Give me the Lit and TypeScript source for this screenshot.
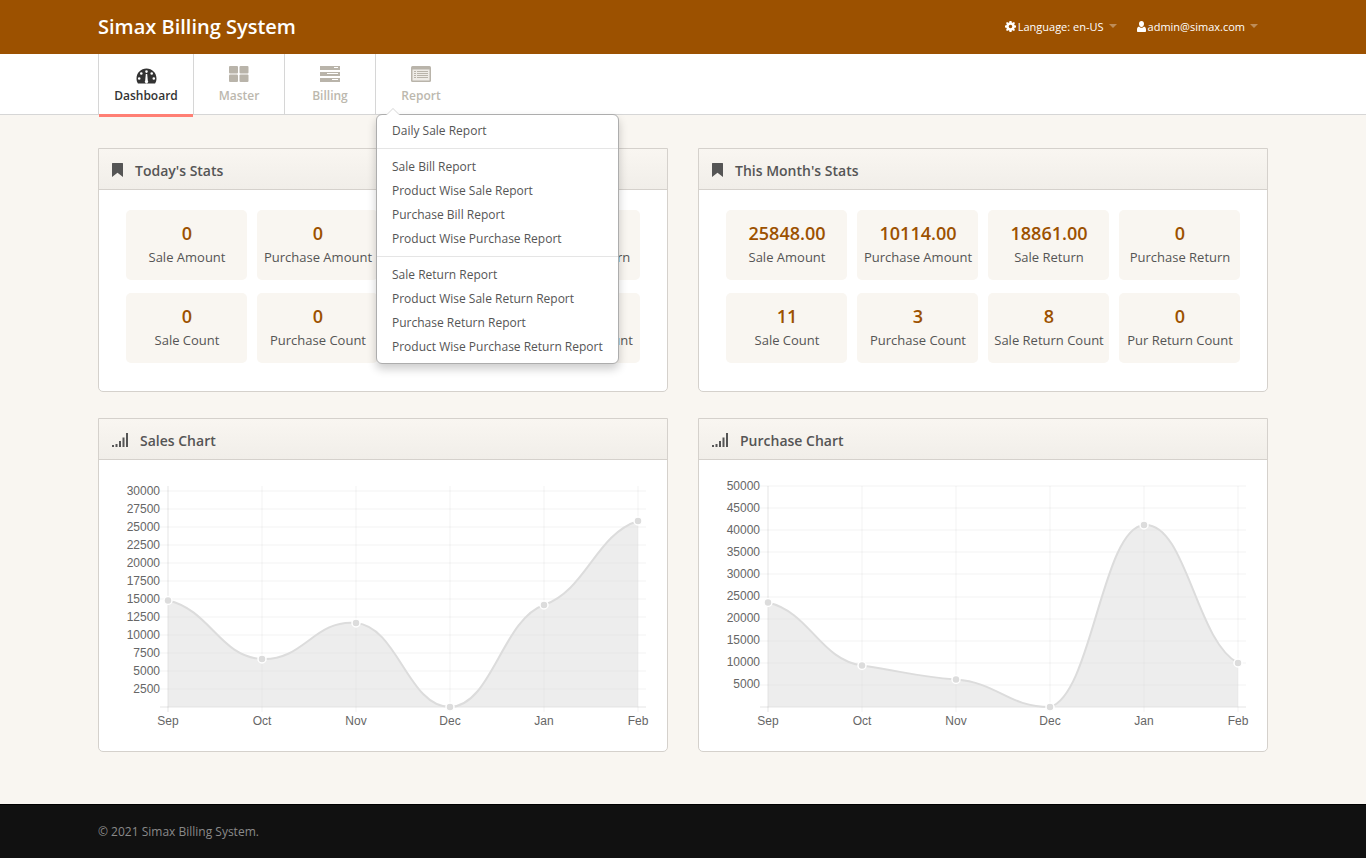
import { LitElement, html, css, svg } from "lit";
import { customElement } from "lit/decorators.js";

type Pt = [number, number];

function spline(pts: Pt[], top: number, bottom: number): string {
  const damp = 0.35;
  const h = 42;
  const n = pts.length;
  const slope = pts.map((p, i) => {
    const a = pts[Math.max(0, i - 1)], b = pts[Math.min(n - 1, i + 1)];
    return (damp * (b[1] - a[1])) / (b[0] - a[0]);
  });
  const cap = (y: number) => Math.min(bottom, Math.max(top, y));
  let d = `M${pts[0][0]} ${pts[0][1]}`;
  for (let i = 1; i < n; i++) {
    const p = pts[i - 1], q = pts[i];
    d += ` C${p[0] + h} ${cap(p[1] + slope[i - 1] * h)} ${q[0] - h} ${cap(q[1] - slope[i] * h)} ${q[0]} ${q[1]}`;
  }
  return d;
}

const MONTHS = ["Sep", "Oct", "Nov", "Dec", "Jan", "Feb"];

function chart(ticks: number[], gridTop: number, ys: number[], x0: number) {
  const bottom = 247;
  const step = (bottom - gridTop) / (ticks.length - 1);
  const xs = MONTHS.map((_, i) => x0 + i * 94);
  const pts: Pt[] = xs.map((x, i) => [x, ys[i]]);
  const line = spline(pts, gridTop, bottom);
  return html`<svg class="chart" width="568" height="291" viewBox="0 0 568 291">
    ${ticks.map((v, i) => {
      const y = gridTop + i * step;
      const yy = Math.round(y);
      return svg`<line x1=${x0 - 8} x2=${x0 + 478} y1=${yy} y2=${yy} stroke="rgba(0,0,0,${v === 0 ? 0.1 : 0.05})"></line>
      ${v === 0 ? "" : svg`<text class="ylab" x=${x0 - 8} y=${y + 3.5}>${v}</text>`}`;
    })}
    ${xs.map(
      (x, i) => svg`<line x1=${x} x2=${x} y1="26" y2="252" stroke="rgba(0,0,0,${i === 0 ? 0.1 : 0.05})"></line>
      <text class="xlab" x=${x} y="265">${MONTHS[i]}</text>`
    )}
    <path d="${line} L${xs[5]} ${bottom} L${xs[0]} ${bottom} Z" fill="rgba(220,220,220,.5)"></path>
    <path d=${line} fill="none" stroke="#dcdcdc" stroke-width="2"></path>
    ${pts.map((p) => svg`<circle cx=${p[0]} cy=${p[1]} r="4" fill="#dcdcdc" stroke="#fff" stroke-width="1.500"></circle>`)}
  </svg>`;
}

const ic = {
  dash: html`<svg class="dash" width="21" height="16" viewBox="0 0 21 16"><path fill="#333" fill-rule="evenodd" d="M10.500 .5C4.900 .5 .5 4.900 .5 10.500c0 1.900.5 3.500 1.400 5h17.200c.9-1.500 1.400-3.100 1.400-5C20.500 4.900 16.100 .5 10.500 .5ZM10.500 2.300a1.300 1.300 0 1 1 0 2.600 1.300 1.300 0 0 1 0-2.600ZM5.300 4.200a1.300 1.300 0 1 1 0 2.600 1.300 1.300 0 0 1 0-2.600ZM15.700 4.200a1.300 1.300 0 1 1 0 2.600 1.300 1.300 0 0 1 0-2.600ZM3.200 9.200a1.300 1.300 0 1 1 0 2.600 1.300 1.300 0 0 1 0-2.600ZM17.800 9.200a1.300 1.300 0 1 1 0 2.600 1.300 1.300 0 0 1 0-2.600ZM9.800 6h1.400l.6 6.400a1.700 1.700 0 1 1-2.600 0Z"></path></svg>`,
  master: html`<svg width="20" height="16" viewBox="0 0 20 16"><g fill="#b9b4aa"><rect x="0" y="0" width="9" height="7.500" rx="1"></rect><rect x="10.500" y="0" width="9" height="7.500" rx="1"></rect><rect x="0" y="8.500" width="9" height="7.500" rx="1"></rect><rect x="10.500" y="8.500" width="9" height="7.500" rx="1"></rect></g></svg>`,
  billing: html`<svg width="20" height="16" viewBox="0 0 20 16"><g fill="#b9b4aa"><rect y="0" width="20" height="4"></rect><rect y="6" width="20" height="4"></rect><rect y="12" width="20" height="4"></rect></g><g fill="#fff"><rect x="14" y="1" width="4" height="1"></rect><rect x="7" y="7" width="11" height="1"></rect><rect x="12" y="13" width="6" height="1"></rect></g></svg>`,
  report: html`<svg width="20" height="16" viewBox="0 0 20 16"><rect width="20" height="16" rx="1.500" fill="#b9b4aa"></rect><rect x="1.500" y="3.500" width="17" height="11" fill="#efece7"></rect><g fill="#b9b4aa"><rect x="3" y="5" width="2" height="1"></rect><rect x="6" y="5" width="11" height="1"></rect><rect x="3" y="7" width="2" height="1"></rect><rect x="6" y="7" width="11" height="1"></rect><rect x="3" y="9" width="2" height="1"></rect><rect x="6" y="9" width="11" height="1"></rect><rect x="3" y="11" width="2" height="1"></rect><rect x="6" y="11" width="11" height="1"></rect></g></svg>`,
  bookmark: html`<svg width="11" height="14" viewBox="0 0 11 14"><path fill="#555" d="M0 .5C0 .2.2 0 .5 0h10c.3 0 .5.2.5.5V14L5.500 9.800 0 14Z"></path></svg>`,
  signal: html`<svg width="16" height="14" viewBox="0 0 16 14"><g fill="#555"><rect x="0" y="12" width="2" height="2"></rect><rect x="3.500" y="11" width="2" height="3"></rect><rect x="7" y="8" width="2" height="6"></rect><rect x="10.500" y="4.500" width="2" height="9.500"></rect><rect x="14" y="0" width="2" height="14"></rect></g></svg>`,
  gear: html`<svg width="11" height="11" viewBox="0 0 11 11"><path fill="#fff" fill-rule="evenodd" d="M4.500 0h2l.3 1.400.9.4L8.900 1l1.100 1.100-.8 1.200.4.900 1.400.3v2l-1.400.3-.4.9.8 1.200L8.900 10l-1.200-.8-.9.4-.3 1.400h-2l-.3-1.400-.9-.4-1.200.8L1 8.900l.8-1.200-.4-.9L0 6.500v-2l1.400-.3.4-.9L1 2.100 2.100 1l1.200.8.9-.4ZM5.500 3.700a1.800 1.800 0 1 0 0 3.600 1.800 1.800 0 0 0 0-3.600Z"></path></svg>`,
  user: html`<svg width="9" height="11" viewBox="0 0 9 11"><path fill="#fff" d="M4.500 0C6.100 0 7 1.200 7 2.800S6 6 4.500 6 2 4.400 2 2.800 2.900 0 4.500 0ZM2 5.500C2.600 6.300 3.500 6.800 4.500 6.800S6.400 6.300 7 5.500c1.300.3 2 1.500 2 3.100V10c0 .6-.4 1-1 1H1c-.6 0-1-.4-1-1V8.600C0 7 .7 5.800 2 5.500Z"></path></svg>`,
};

@customElement("app-root")
export class AppRoot extends LitElement {
  static styles = css`
    :host { display: block; min-height: 858px; background: #f9f6f1; font-family: "Open Sans", sans-serif; font-size: 13px; color: #555; }
    * { box-sizing: border-box; }
    .wrap { width: 1170px; margin: 0 auto; }
    .top { background: #9c5100; height: 54px; color: #fff; }
    .top .wrap { display: flex; align-items: center; justify-content: space-between; height: 54px; padding-bottom: 2px; }
    .brand { font-size: 20px; font-weight: 600; }
    .topr { display: flex; align-items: center; padding-right: 10px; font-size: 11px; }
    .topi { display: flex; align-items: center; gap: 2px; }
    .topi.u { margin-left: 20px; }
    .caret { width: 0; height: 0; margin-left: 3px; border: 4px solid transparent; border-top-color: rgba(255,255,255,.35); border-bottom: 0; }
    .sub { background: #fff; height: 61px; border-bottom: 1px solid #d6d6d6; }
    .tabs { display: flex; }
    .tab { position: relative; width: 91px; height: 60px; border-left: 1px solid #d6d6d6; display: flex; flex-direction: column; align-items: center; padding-top: 12px; font-size: 12px; line-height: 16px; font-weight: 600; color: #bcb8ae; }
    .tab svg { display: block; height: 16px; margin-bottom: 6px; }
    .tab svg.dash { margin-top: 2px; margin-bottom: 4px; }
    .tab.act { width: 95px; color: #333; }
    .tab.act::after { content: ""; position: absolute; left: 0; right: 0; bottom: -3px; height: 3px; background: #ff7f74; }
    .menu { position: absolute; z-index: 5; left: 0; top: 60px; width: 243px; height: 250px; background: #fff; border: 1px solid #adadad; border-radius: 6px; box-shadow: 0 5px 10px rgba(0,0,0,.2); padding: 4px 0; color: #555; font-size: 12px; line-height: 24px; font-weight: 400; }
    .menu::before { content: ""; position: absolute; left: 9px; top: -7px; border: 7px solid transparent; border-top: 0; border-bottom-color: #d6d6d6; }
    .menu::after { content: ""; position: absolute; left: 10px; top: -6px; border: 6px solid transparent; border-top: 0; border-bottom-color: #fff; }
    .menu div.it { height: 24px; padding-left: 15px; white-space: nowrap; }
    .menu hr { margin: 5px 0 6px; border: 0; border-top: 1px solid #e5e5e5; height: 0; }
    .main { padding-top: 33px; height: 689px; }
    .grid { display: grid; grid-template-columns: 570px 570px; gap: 26px 30px; }
    .panel { background: #fff; border: 1px solid #d5d1cc; border-radius: 0 0 5px 5px; }
    .phead { height: 41px; border-bottom: 1px solid #d5d1cc; background: linear-gradient(#f9f6f1, #f1eee9); display: flex; align-items: center; padding: 2px 0 0 13px; font-size: 14px; font-weight: 600; color: #555; }
    .phead svg { margin-right: 12px; }
    .tiles { display: grid; grid-template-columns: repeat(4, 121px); gap: 13px 10px; padding: 20px 27px 28px; }
    .tile { height: 70px; background: #f9f6f1; border-radius: 5px; text-align: center; padding: 9px 0 0 1px; }
    .val { font-size: 18px; font-weight: 600; color: #9c5100; line-height: 28px; }
    .lab { font-size: 13px; color: #555; line-height: 18px; padding-top: 1px; white-space: nowrap; }
    .chart { display: block; }
    .ylab { font: 12px "Liberation Sans", Arial, sans-serif; fill: #666; text-anchor: end; }
    .xlab { font: 12px "Liberation Sans", Arial, sans-serif; fill: #666; text-anchor: middle; }
    .foot { height: 54px; background: #111; border-top: 1px solid #000; color: #8a8a8a; font-size: 12px; display: flex; align-items: center; }
  `;

  private tiles(vals: string[]) {
    const labs = ["Sale Amount", "Purchase Amount", "Sale Return", "Purchase Return", "Sale Count", "Purchase Count", "Sale Return Count", "Pur Return Count"];
    return html`<div class="tiles">${labs.map((l, i) => html`<div class="tile"><div class="val">${vals[i]}</div><div class="lab">${l}</div></div>`)}</div>`;
  }

  render() {
    const sticks = [30000, 27500, 25000, 22500, 20000, 17500, 15000, 12500, 10000, 7500, 5000, 2500, 0];
    const pticks = [50000, 45000, 40000, 35000, 30000, 25000, 20000, 15000, 10000, 5000, 0];
    return html`
      <div class="top"><div class="wrap">
        <div class="brand">Simax Billing System</div>
        <div class="topr">
          <div class="topi">${ic.gear}<span>Language: en-US</span><i class="caret"></i></div>
          <div class="topi u">${ic.user}<span>admin@simax.com</span><i class="caret"></i></div>
        </div>
      </div></div>
      <div class="sub"><div class="wrap tabs">
        <div class="tab act">${ic.dash}Dashboard</div>
        <div class="tab">${ic.master}Master</div>
        <div class="tab">${ic.billing}Billing</div>
        <div class="tab">${ic.report}Report
          <div class="menu">
            <div class="it">Daily Sale Report</div><hr />
            <div class="it">Sale Bill Report</div>
            <div class="it">Product Wise Sale Report</div>
            <div class="it">Purchase Bill Report</div>
            <div class="it">Product Wise Purchase Report</div><hr />
            <div class="it">Sale Return Report</div>
            <div class="it">Product Wise Sale Return Report</div>
            <div class="it">Purchase Return Report</div>
            <div class="it">Product Wise Purchase Return Report</div>
          </div>
        </div>
      </div></div>
      <div class="main"><div class="wrap grid">
        <div class="panel"><div class="phead">${ic.bookmark}Today's Stats</div>${this.tiles(["0", "0", "0", "0", "0", "0", "0", "0"])}</div>
        <div class="panel"><div class="phead">${ic.bookmark}This Month's Stats</div>${this.tiles(["25848.00", "10114.00", "18861.00", "0", "11", "3", "8", "0"])}</div>
        <div class="panel"><div class="phead">${ic.signal}Sales Chart</div>${chart(sticks, 31, [140.5, 199, 163, 247, 145, 61], 69)}</div>
        <div class="panel"><div class="phead">${ic.signal}Purchase Chart</div>${chart(pticks, 26, [142.5, 205.5, 219.5, 247, 65, 203], 69)}</div>
      </div></div>
      <div class="foot"><div class="wrap">© 2021 Simax Billing System.</div></div>
    `;
  }
}
